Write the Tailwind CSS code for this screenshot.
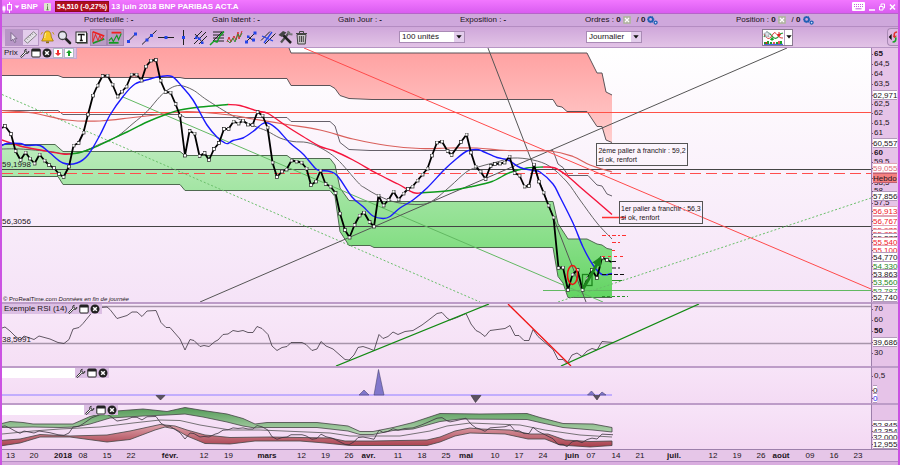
<!DOCTYPE html>
<html lang="fr">
<head>
<meta charset="utf-8">
<meta name="viewport" content="width=device-width, initial-scale=1">
<title>BNP PARIBAS ACT.A</title>
<script src="https://cdn.jsdelivr.net/npm/@tailwindcss/browser@4"></script>
</head>
<body class="min-h-screen flex flex-col bg-[#e6c3e8] border-x-2 border-[#cb52e2] font-['Liberation_Sans',Arial,sans-serif] text-[8px] leading-[10px] text-[#1c1420] overflow-x-hidden">

<svg class="hidden" aria-hidden="true">
  <defs>
    <symbol id="wrench" viewBox="0 0 10 10"><path d="M6.200 1.200C4.600 1.600 4.200 3 4.800 4.200L.8 8.200c-.4.8.4 1.500 1.100 1.100L5.900 5.200C7.400 5.800 9 5 9 3.400L7.600 4.400 6 4 5.800 2.600z" fill="#fff" stroke="#222" stroke-width=".9"/></symbol>
    <symbol id="win" viewBox="0 0 10 10"><rect x=".8" y="1" width="8.400" height="8" rx="1" fill="#fff" stroke="#222"/><path d="M.8 1h8.400v2.500H.8z" fill="#222"/></symbol>
    <symbol id="close" viewBox="0 0 10 10"><circle cx="5" cy="5" r="4.500" fill="#222"/><path d="m3.200 3.200 3.600 3.600m0-3.600L3.200 6.800" stroke="#fff" stroke-width="1.500"/></symbol>
    <symbol id="orderx" viewBox="0 0 8 8"><rect width="8" height="8" rx="1" fill="#b4b4a6"/><path d="m2 2 4 4m0-4L2 6" stroke="#fff" stroke-width="1.300"/></symbol>
    <symbol id="gears" viewBox="0 0 11 9"><circle cx="3.600" cy="3.400" r="2.300" fill="none" stroke="#1f5fb4" stroke-width="1.800"/><circle cx="3.600" cy="3.400" r="3.200" fill="none" stroke="#1f5fb4" stroke-width=".9" stroke-dasharray="1.200 1.100"/><circle cx="8.600" cy="6.600" r="1.500" fill="#cfe0ff" stroke="#1f5fb4" stroke-width="1.300"/></symbol>
    <symbol id="down" viewBox="0 0 6 4"><path d="M.3.3h5.400L3 3.600z" fill="#111"/></symbol>
  </defs>
</svg>

<header class="h-[14px] flex items-center pr-[2px] bg-linear-to-b from-[#f277ff] to-[#d95cf0] border-b border-[#b565c8] text-white font-bold">
  <svg class="w-[11px] h-3" viewBox="0 0 11 12" fill="none" stroke="#fff"><path d="M2 4.500v7M7.500 1v11"/><rect x="1" y="6" width="2" height="3" fill="#fff"/><rect x="5.500" y="3.500" width="4" height="5.500" fill="#e468f8"/></svg>
  <svg class="w-[6px] h-1 ml-[1px]" viewBox="0 0 6 4"><path d="M.5.5h5L3 3.500z" fill="#fff"/></svg>
  <h1 class="ml-[1px] w-[23px]">BNP</h1>
  <button aria-label="Informations" class="w-[7px] h-2"><svg class="size-full" viewBox="0 0 7 8"><rect width="7" height="8" rx="1" fill="#dfe6cf"/><path d="M3.500 1.200v1.300M3.500 3.300v3.500M2.400 6.800h2.200" stroke="#5c7c50"/></svg></button>
  <span class="ml-1 px-[1px] h-[11px] bg-[#b00d1d] border border-[#8a0a20] text-[7px] leading-[9px]">54,510 (-0,27%)</span>
  <span class="ml-[2px]">13 juin 2018 BNP PARIBAS ACT.A</span>
  <div class="ml-auto flex items-center gap-1">
    <button aria-label="Clavier" class="w-[13px] h-[9px]"><svg class="size-full" viewBox="0 0 13 9"><rect width="13" height="9" rx="1" fill="#fff"/><path d="M2 2.500h9M2 4.500h9" stroke="#c95be0" stroke-dasharray="1 1"/><path d="M3.500 6.800h6" stroke="#c95be0"/></svg></button>
    <button aria-label="Réduire" class="w-[6px] h-2"><svg class="size-full" viewBox="0 0 6 8"><path d="M0 7h6" stroke="#fff" stroke-width="1.500"/></svg></button>
    <button aria-label="Restaurer" class="w-[6px] h-2"><svg class="size-full" viewBox="0 0 6 8" fill="none" stroke="#fff"><path d="M2 3V1h3.500v4H4"/><path d="M.5 3.500H4v3.500H.5z"/></svg></button>
    <button aria-label="Fermer" class="w-[7px] h-2"><svg class="size-full" viewBox="0 0 7 8"><path d="m1 1.500 5 5m0-5-5 5" stroke="#fff" stroke-width="1.500"/></svg></button>
  </div>
</header>

<div class="h-[13px] grid grid-cols-[128fr_126fr_122fr_125fr_151fr_162fr] items-center pl-[82px] bg-[#cfa8dc] border-b border-[#b48cc2] leading-3">
  <span>Portefeuille : <b>-</b></span>
  <span>Gain latent : <b>-</b></span>
  <span>Gain Jour : <b>-</b></span>
  <span>Exposition : <b>-</b></span>
  <span class="flex items-center gap-[2px]"><span>Ordres : <b>0</b></span><svg class="size-2"><use href="#orderx"/></svg><span class="ml-1">/ <b>0</b></span><svg class="w-[11px] h-[9px]"><use href="#gears"/></svg></span>
  <span class="flex items-center gap-[2px]"><span>Position : <b>0</b></span><svg class="size-2"><use href="#orderx"/></svg><span class="ml-1">/ <b>0</b></span><svg class="w-[11px] h-[9px]"><use href="#gears"/></svg></span>
</div>

<div class="h-[21px] flex items-center pl-[3px] bg-linear-to-b from-[#cfa7da] to-[#e2c3e6] border-b border-[#b795c4]">
  <div class="flex items-center [&>button]:w-[17px] [&>button]:h-[17px] [&_svg]:size-full" role="toolbar" aria-label="Outils de dessin">
    <button aria-label="Curseur" class="bg-[#b796c6]"><svg viewBox="0 0 17 17"><path d="M6 3.500v8.500l2-1.800 1.600 3.300 1.300-.7-1.500-3.100h2.600z" fill="#e8dcf0" stroke="#6d5a7c" stroke-width=".8"/></svg></button>
    <button aria-label="Règle" class="bg-[#e3cdec] border border-[#b796c6]"><svg viewBox="0 0 17 17"><path d="M1.500 11.500 12 2l3.500 3.500L5 15z" fill="#e6e2ea" stroke="#777" stroke-width="1"/><path d="m4 9.500 1.500 1.500M6 7.700 7.500 9.200M8 5.900l1.500 1.500M10 4.100l1.500 1.500" stroke="#777" stroke-width=".8"/></svg></button>
    <button aria-label="Alerte"><svg viewBox="0 0 17 17"><path d="M8.500 2c3 0 3.600 3 3.800 6l2 4H2.700l2-4c.2-3 .8-6 3.800-6z" fill="#f6c522" stroke="#9a7410" stroke-width=".8"/><path d="M7 12.500h3v1.700H7z" fill="#8c6b12"/><path d="M3.500 3 2 5.500M13.500 3 15 5.500" stroke="#c79a15"/><path d="M7 4c-1 1-1 3-1.200 5" stroke="#fff4b0" fill="none"/></svg></button>
    <button aria-label="Zoom"><svg viewBox="0 0 17 17"><path d="m9 9 5 5" stroke="#222" stroke-width="2.600" stroke-linecap="round"/><circle cx="6.500" cy="6.500" r="4" fill="#e6e6ee" stroke="#444" stroke-width="1.300"/></svg></button>
    <button aria-label="Texte"><svg viewBox="0 0 17 17"><path d="M4 14.500h10.500V4" stroke="#777" fill="none"/><rect x="3" y="3" width="10.500" height="10.500" fill="#fff" stroke="#333"/><path d="M5.500 6.500V5.500h5.500v1M8.250 5.500v6M6.800 11.500h3" stroke="#111" stroke-width="1.300" fill="none"/></svg></button>
    <button aria-label="Triangle" class="bg-[#b99bc4] border border-[#a485b2]"><svg viewBox="0 0 17 17" fill="none"><path d="m2 2 13 5" stroke="#f02020" stroke-width="2"/><path d="m2 15 13-5" stroke="#129a20" stroke-width="2"/><path d="M2 2v12l3-9 3 7 2-6 2 5 2-4" stroke="#e03030" stroke-width="1.200"/></svg></button>
    <button aria-label="Supports" class="bg-[#b99bc4] border border-[#a485b2]"><svg viewBox="0 0 17 17" fill="none"><path d="M4 3h11" stroke="#f02020" stroke-width="2"/><path d="M1 14.500h11" stroke="#129a20" stroke-width="2"/><path d="m1 12 3-3 2 4 4-7 2 5 3-7" stroke="#169a24" stroke-width="1.300"/></svg></button>
    <button aria-label="Segment"><svg viewBox="0 0 17 17"><path d="m4.500 12 7-7" stroke="#222"/><path d="M10 3.500h3v3h-3zM3 11h3v3H3z" fill="#2445e8"/></svg></button>
    <button aria-label="Droite"><svg viewBox="0 0 17 17"><path d="M1 15.500 15.500 1.500" stroke="#222"/><path d="M9 5h3v3H9zM4.500 9.500h3v3h-3z" fill="#2445e8"/></svg></button>
    <button aria-label="Horizontale"><svg viewBox="0 0 17 17"><path d="M0 8.500h16" stroke="#222"/><path d="M6.500 7h3v3h-3z" fill="#2445e8"/></svg></button>
    <button aria-label="Verticale"><svg viewBox="0 0 17 17"><path d="M8.500 1v15" stroke="#222"/><path d="M7 7h3v3H7z" fill="#2445e8"/></svg></button>
    <button aria-label="Fourchette"><svg viewBox="0 0 17 17" fill="none" stroke="#222"><path d="m2 10 8-8M2 15 14 3M7 15l8-8M3 5l8 9"/><path d="M3 7.500h2.500V10H3zM9 12.500h2.500V15H9zM6 8.500h2.500V11H6z" fill="#2445e8" stroke="none"/></svg></button>
    <button aria-label="Fibonacci"><svg viewBox="0 0 17 17" fill="none"><path d="M4 3h11M4 6h11M4 9h11M4 12h11" stroke="#222"/><path d="m4 12 9-9" stroke="#222"/><path d="m1 16 4-4 3 1 3-6 4-4.500" stroke="#14a024" stroke-width="1.500"/></svg></button>
    <button aria-label="Vagues"><svg viewBox="0 0 17 17" fill="none"><path d="m1 13 2-5 2 5 3-6 2 4 2-8 1 7 3-8" stroke="#d52b2b"/><path d="m1 11 3 3 3-5 2 4 3-8 2 3 2-4" stroke="#3a8f3a"/></svg></button>
    <button aria-label="Points"><svg viewBox="0 0 17 17" fill="none"><path d="m3 13 9-9M4 7l7 5" stroke="#222"/><path d="M10.500 2.500h3v3h-3zM2 11.500h3v3H2zM9 9.500h3v3H9zM4 6.500h2.500V9H4z" fill="#2445e8"/></svg></button>
    <button aria-label="Canal"><svg viewBox="0 0 17 17" fill="none"><path d="M1 11.500 10 2.500M5 15 15.500 4.500" stroke="#222"/><path d="m2 7 11 5M4 14l8-11" stroke="#2445e8" stroke-width="1.300"/></svg></button>
    <button aria-label="Réglages"><svg viewBox="0 0 17 17"><path d="M12.500 3 4 13.500" stroke="#555" stroke-width="2.200"/><path d="m6 6 8 8" stroke="#222" stroke-width="2.500"/><path d="M1.500 6 6 2l3.500 1.500L5 8z" fill="#444"/><path d="m11 2 1 3 3.500.5" stroke="#777" stroke-width="2" fill="none"/></svg></button>
    <button aria-label="Supprimer"><svg viewBox="0 0 17 17"><path d="M3 5.500h9l-.8 9.500H3.800z" fill="#c8c4c8" stroke="#444"/><path d="M2 4.500h11M5.500 4V2.500h4V4M5.700 7v6M7.500 7v6M9.300 7v6" stroke="#444" fill="none"/></svg></button>
  </div>
  <label class="ml-[88px] w-[66px] h-3 flex items-center bg-white border border-[#a98bb5]"><select aria-label="Nombre d'unités" class="appearance-none bg-transparent flex-1 min-w-0 pl-[2px] leading-[10px]"><option>100 unités</option></select><span class="w-[10px] h-full flex items-center justify-center bg-[#e3cdec] pointer-events-none"><svg class="w-[6px] h-1"><use href="#down"/></svg></span></label>
  <label class="ml-[121px] w-[56px] h-3 flex items-center bg-white border border-[#a98bb5]"><select aria-label="Unité de temps" class="appearance-none bg-transparent flex-1 min-w-0 pl-[2px] leading-[10px]"><option>Journalier</option></select><span class="w-[10px] h-full flex items-center justify-center bg-[#e3cdec] pointer-events-none"><svg class="w-[6px] h-1"><use href="#down"/></svg></span></label>
  <button aria-label="Modèle de graphique" class="ml-auto w-[31px] h-[17px] flex bg-white border border-[#8a7a90]">
    <svg class="w-[21px] h-full" viewBox="0 0 21 15" fill="none"><path d="M1 7c3-6 6-4 8-1s5 4 8-2l3-1" stroke="#2c9a3a" stroke-width="1.200"/><path d="M1 4c4 7 6 5 9 0s4 5 10 4" stroke="#d84040"/><path d="M1 14.500h19" stroke="#4d6be0" stroke-width="1.500"/><path d="M2 14v-2M5 14v-3M8 14v-2M14 14v-2M18 14v-3" stroke="#18a028" stroke-width="2"/><path d="M3.500 14v-2M11 14v-2M16 14v-3" stroke="#e02020" stroke-width="1.500"/><path d="M9 11V8M7.500 9.500 9 7.500l1.500 2z" stroke="#18a028" fill="#18a028"/><path d="M16 2v3M14.500 4.500 16 6.500l1.500-2z" stroke="#e02020" fill="#e02020"/><path d="m4 1 1 2 2 .3L5.500 5 6 7 4 6 2 7l.5-2L1 3.300 3 3z" fill="#dde3ea" stroke="#8a96a4" stroke-width=".7"/></svg>
    <span class="flex-1 h-full flex items-center justify-center border-l border-[#b79cc0]"><svg class="w-[6px] h-1"><use href="#down"/></svg></span>
  </button>
  <button aria-label="Passer un ordre" class="ml-[94px] w-[11px] h-[18px] rounded-l bg-[#dcb8e2] border border-r-0 border-[#a98bb5]"><svg class="size-full" viewBox="0 0 11 17"><path d="M4 5v7L.8 8.500z" fill="#111"/><path d="M10 3C7 3 6.500 5 7 8" stroke="#e03030" stroke-width="1.800" fill="none"/><path d="M5 7h5L7 10z" fill="#e03030"/><path d="M5 14c3.500 0 4-2 3.500-5" stroke="#18a028" stroke-width="1.800" fill="none"/></svg></button>
</div>

<main class="grid grid-cols-[minmax(0,1fr)_27px]">
  <!-- Prix -->
  <section class="relative h-[254px] bg-linear-to-b from-white to-[#f5e3f7] overflow-hidden" aria-label="Prix">
    <svg class="block size-full" viewBox="2 48 869 254" preserveAspectRatio="none" fill="none" stroke-width="1">
      <defs>
        <linearGradient id="gr" gradientUnits="userSpaceOnUse" x1="0" y1="48" x2="0" y2="142"><stop offset="0" stop-color="#ffa0a0"/><stop offset="1" stop-color="#ffcdcd"/></linearGradient>
        <linearGradient id="gg" gradientUnits="userSpaceOnUse" x1="0" y1="144" x2="0" y2="298"><stop offset="0" stop-color="#bcebbd"/><stop offset=".6" stop-color="#8adf8a"/><stop offset="1" stop-color="#62d462"/></linearGradient>
        <marker id="pt" markerUnits="userSpaceOnUse" markerWidth="4" markerHeight="4" refX="2" refY="2"><rect x=".5" y=".5" width="3" height="3" fill="#fff" stroke="#222" stroke-width=".7"/></marker>
        <marker id="ah" markerUnits="userSpaceOnUse" markerWidth="12" markerHeight="10" refX="8" refY="5" orient="auto"><path d="M0 0 10 5 0 10z" fill="#1d861d"/></marker>
      </defs>
      <path fill="url(#gr)" d="M2 48H289L291 53H587L597 73H602L606 92 612 95V142.500L606 140 602 126.500H597L587 111.500H567L562 107 557 106 553 99.500H372L349 98.500 340 95.500 335 88.500 330 85.500H291L287 78.500H185L180 77.500H63L58 75.500H2z"/>
      <path stroke="#5b5358" d="M289 48 291 53H587L597 73H602L606 92 612 95M612 142.500 606 140 602 126.500H597L587 111.500H567L562 107 557 106 553 99.500H372L349 98.500 340 95.500 335 88.500 330 85.500H291L287 78.500H185L180 77.500H63L58 75.500H2"/>
      <path fill="url(#gg)" d="M2 144.500H55L63 151.500H180L185 155.500H287L291 158.500H330L335 165 340 188 349 200.500 371 201.500H553L558 223.500 568 239H587L597 244 602 245 607 248.500 612 249.500V297.500H568L563 283 558 276.500 553 247.500H374L370 245.500H349L340 231.500 335 196.500 330 190.500H185L180 184.500H63L58 176.500H2z"/>
      <path stroke="#4f6a50" d="M2 144.500H55L63 151.500H180L185 155.500H287L291 158.500H330L335 165 340 188 349 200.500 371 201.500H553L558 223.500 568 239H587L597 244 602 245 607 248.500 612 249.500M612 297.500H568L563 283 558 276.500 553 247.500H374L370 245.500H349L340 231.500 335 196.500 330 190.500H185L180 184.500H63L58 176.500H2"/>
      <path stroke="#66606a" d="M2 110.500H58L63 114.500H180L185 117.500H287L291 121.500H330L335 126 340 142.500 349 149.500 370 150.500H553L558 164 563 167.500 568 175.500H588L597 185 602 186 607 194 612 196"/>
      <path stroke="#ff5147" d="M2 112.500H871"/>
      <path stroke="#444" d="M2 169.500H871M2 226.500H871"/>
      <path stroke="#ff4d4d" stroke-dasharray="11 5" d="M2 173.500H871"/>
      <path stroke="#62b862" d="M123 97 603 302M543 290.500H871"/>
      <path stroke="#6abf6a" stroke-dasharray="2 2" d="M2 94.500 480 302M558 302 871 198"/>
      <path stroke="#555" d="M200 302 787 48M488 48 586 302"/>
      <path stroke="#ff4a4a" d="M304 48 871 289"/>
      <g id="curves"></g>
      <path id="price" stroke="#000" stroke-width="1.800" marker-mid="url(#pt)" stroke-linejoin="round"/>
      <ellipse cx="572.500" cy="275" rx="5" ry="9.500" stroke="#f01010" stroke-width="1.500"/>
      <rect x="582.500" y="274.500" width="9.500" height="11" stroke="#1d861d" stroke-width="1.300"/>
      <path stroke="#1d861d" stroke-width="3" marker-end="url(#ah)" d="M583 289 600.500 258"/>
      <g stroke="#ff3030"><path d="M602 217.500H626" stroke-width="1.500"/><path stroke-dasharray="4 2 2 2" d="M602 235.500H626M612 242.500H621"/><path stroke-dasharray="3 3" d="M612 250.500H618M602 256.500H626"/></g>
      <g stroke="#111" stroke-dasharray="4 2"><path d="M612 261.500H618M612 268H620M602 274.500H626"/></g>
      <g stroke="#2b8f2b"><path d="M612 280.500H622"/><path stroke-dasharray="3 2" d="M602 296.500H628"/></g>
    </svg>
    <div class="absolute left-0 top-0 flex items-center h-[11px] pl-[2px] pr-[2px] gap-[1px] bg-[#dcbfe4] border-r border-b border-[#c5a5cf]"><h2>Prix</h2><button aria-label="Réglages Prix" class="size-[10px] ml-[1px]"><svg class="size-full"><use href="#wrench"/></svg></button><button aria-label="Agrandir Prix" class="size-[10px]"><svg class="size-full"><use href="#win"/></svg></button><button aria-label="Fermer Prix" class="size-[10px]"><svg class="size-full"><use href="#close"/></svg></button><button aria-label="Vendre" class="size-[10px]"><svg class="size-full" viewBox="0 0 10 10"><rect x=".5" y=".5" width="9" height="9" fill="#fff" stroke="#aebac4"/><path d="M4 2h2v3h2L5 8 2 5h2z" fill="#f03030"/></svg></button><button aria-label="Acheter" class="size-[10px]"><svg class="size-full" viewBox="0 0 10 10"><rect x=".5" y=".5" width="9" height="9" fill="#fff" stroke="#aebac4"/><path d="M4 8h2V5h2L5 2 2 5h2z" fill="#18a028"/></svg></button></div>
    <span class="absolute left-0 top-[112px]">59,1998</span>
    <span class="absolute left-0 top-[169px]">56,3056</span>
    <p class="absolute left-[1px] bottom-[-2px] text-[6px]">© ProRealTime.com <i>Données en fin de journée</i></p>
    <p class="absolute left-[68.400%] top-[95px] w-max h-[23px] px-[1px] pt-[2px] text-[7px] leading-[9px] whitespace-nowrap border border-[#555] bg-white/10">2ème palier à franchir : 59,2<br>si ok, renfort</p>
    <p class="absolute left-[71%] top-[153px] w-max h-[23px] px-[1px] pt-[2px] text-[7px] leading-[9px] whitespace-nowrap border border-[#555] bg-white/10">1er palier à franchir : 56,3<br>si ok, renfort</p>
  </section>
  <div id="ax1" class="relative overflow-hidden border-l border-[#9c7fab]"></div>

  <!-- RSI -->
  <section class="relative h-16 border-t-2 border-[#bd9cc8] bg-linear-to-b from-[#f8e8f9] to-[#f5dff5] overflow-hidden" aria-label="Exemple RSI">
    <svg class="block size-full" viewBox="2 304 869 62" preserveAspectRatio="none" fill="none">
      <path stroke="#a795aa" stroke-width="1.500" d="M2 306.500H871M2 343.500H871"/>
      <path id="rsi" stroke="#3b333d" stroke-width=".8" vector-effect="non-scaling-stroke"/>
      <path stroke="#128a12" stroke-width="1.300" d="M336 366 489 304M561 366 699 304"/>
      <path stroke="#f01414" stroke-width="1.300" d="M508 304 571 366"/>
    </svg>
    <div class="absolute left-0 top-0 flex items-center h-[10px] pl-[2px] pr-[2px] gap-[1px] bg-[#dcbfe4]"><h2>Exemple RSI (14)</h2><button aria-label="Réglages RSI" class="size-[10px]"><svg class="size-full"><use href="#wrench"/></svg></button><button aria-label="Agrandir RSI" class="size-[10px]"><svg class="size-full"><use href="#win"/></svg></button><button aria-label="Fermer RSI" class="size-[10px]"><svg class="size-full"><use href="#close"/></svg></button></div>
    <span class="absolute left-0 top-[31px]">38,5091</span>
  </section>
  <div id="ax2" class="relative overflow-hidden border-l border-t-2 border-l-[#9c7fab] border-t-[#bd9cc8]"></div>

  <!-- Signaux -->
  <section class="relative h-[37px] border-t-2 border-[#bd9cc8] bg-linear-to-b from-[#f7e4f8] to-[#f4dbf4] overflow-hidden" aria-label="Signaux">
    <svg class="block size-full" viewBox="2 368 869 35" preserveAspectRatio="none">
      <path stroke="#b09cff" stroke-width="1.500" d="M2 395H612"/>
      <path fill="#8277cc" stroke="#4a4470" stroke-width=".6" d="M359 395 364 390 369 395zM374 395 378.500 369.500 384 395zM587.500 395 591.500 391 595 395zM599 395 602 392 606 395z"/>
      <path fill="#5c5260" stroke="#333" stroke-width=".6" d="M156 395.500H165L160.500 400zM471 395.500H481L475.500 402.500zM593.500 395.500H600L597 400z"/>
    </svg>
    <div class="absolute left-0 top-0 flex items-center h-[10px] bg-[#dcbfe4] gap-[1px] pr-[1px]"><span class="w-[73px] h-full bg-white"></span><button aria-label="Réglages" class="size-[10px]"><svg class="size-full"><use href="#wrench"/></svg></button><button aria-label="Agrandir" class="size-[10px]"><svg class="size-full"><use href="#win"/></svg></button><button aria-label="Fermer" class="size-[10px]"><svg class="size-full"><use href="#close"/></svg></button></div>
  </section>
  <div id="ax3" class="relative overflow-hidden border-l border-t-2 border-l-[#9c7fab] border-t-[#bd9cc8]"></div>

  <!-- Bandes -->
  <section class="relative h-[46px] border-t-2 border-[#bd9cc8] bg-linear-to-b from-[#f7e4f8] to-[#f3d8f3] overflow-hidden" aria-label="Bandes">
    <svg class="block size-full" viewBox="2 405 869 44" preserveAspectRatio="none" fill="none">
      <defs>
        <linearGradient id="bg" gradientUnits="userSpaceOnUse" x1="0" y1="408" x2="0" y2="434"><stop offset="0" stop-color="#559c58"/><stop offset="1" stop-color="#b5d4b3"/></linearGradient>
        <linearGradient id="br" gradientUnits="userSpaceOnUse" x1="0" y1="424" x2="0" y2="447"><stop offset="0" stop-color="#e0a5ae"/><stop offset="1" stop-color="#a83e4c"/></linearGradient>
      </defs>
      <path fill="url(#bg)" stroke="#444" stroke-width=".8" d="M0 424 10 421.500 23 422.500 33 424H73L90 416.500 110 411.500 143 409 167 411.500 185 407.500 203 410.500 227 414 243 418.500 255 424 267 422.500 317 422.500 348 426 360 431.500H373L393 427.500 413 422.500 440 413.500 480 414 527 413.500 540 417.500 563 423.500 593 424 612 427.500V432L593 430 563 427.500 540 422.500 527 419.500 460 419 440 421.500 413 429 393 430.500 373 434.500H360L348 431 317 427.500H267L255 428 243 426 227 422 203 417 185 414 167 415 143 416 110 418 90 424 75 427 60 427.500 33 427 0 427.500z"/>
      <path fill="url(#br)" stroke="#444" stroke-width=".8" d="M0 440.500 20 439 40 434.500 70 436 107 435 130 431 160 424.500 175 426 187 430 205 435 230 437.500 270 437 330 438 345 441H373L427 440 440 437 455 431 470 428 480 429 510 430 530 434H548L565 440 590 441.500 612 441V445.500L590 447 560 445 545 439H528L505 434 470 433 455 436 440 442 427 445.500H350L325 443 300 441H255L230 444 205 443.500 187 436 175 429 165 427 155 430 130 439.500 107 442 70 437H40L20 443 0 446z"/>
      <path stroke="#555" stroke-width=".8" d="M2 434 33 431 60 429 100 427 133 423 160 420 180 420.500 200 425 230 430H260L330 433 350 436H400L430 431 447 426 470 423 520 425 545 430 580 435 612 437"/>
      <use href="#rsi" transform="matrix(1 0 0 .57 0 239.500)"/>
    </svg>
    <div class="absolute left-0 top-0 flex items-center h-[10px] bg-[#dcbfe4] gap-[1px] pr-[1px]"><span class="w-[82px] h-full bg-white"></span><button aria-label="Réglages" class="size-[10px]"><svg class="size-full"><use href="#wrench"/></svg></button><button aria-label="Agrandir" class="size-[10px]"><svg class="size-full"><use href="#win"/></svg></button><button aria-label="Fermer" class="size-[10px]"><svg class="size-full"><use href="#close"/></svg></button></div>
  </section>
  <div id="ax4" class="relative overflow-hidden border-l border-t-2 border-l-[#9c7fab] border-t-[#bd9cc8]"></div>

  <div id="dates" class="relative h-3 border-t border-[#9c7fab] bg-[#e6c6e8] overflow-hidden"></div>
  <div class="bg-[#e6c6e8] border-t border-[#9c7fab]"></div>
</main>
<footer class="min-h-1 flex-1 bg-[#d9addf] border-t border-[#b48cc2]"></footer>

<script>
// Price samples, one [x, y] pair per session
const price = "2 128 5 126 11 134 15.5 151 20.5 160 25.5 152.5 30 158.5 34.5 163.5 39.5 154.5 44.5 160.5 49 165 54 168 59 174 63.5 177 69 166.5 73.5 145.5 78.5 143 83.5 132.5 88 114.5 93 95.5 97.5 85.5 102.5 76 107.5 75.5 112.5 84.5 117.5 96.5 122 91.5 126.5 86.5 131.5 74.5 136.5 74.5 141.5 80.5 146 66.5 151 60.5 156 60 160.5 80.5 165.5 92 170.5 92.5 175.5 104 180 115.5 185 155.5 189.5 131 194.5 133.5 199.5 156 204.5 153 209 160 214 149 219 143 224 129 228.5 129 233.5 121.5 238.5 123.5 243 120.5 248 124.5 252.5 125 257.5 112 262.5 115.5 267.5 127.5 272.5 162.5 277 177 282 171.5 286.5 169.5 291.5 160.5 296.5 161.5 301.5 162.5 306.5 168.5 311 185 316 181.5 320.5 170.5 325.5 184 330.5 186.5 335.5 193 340 213.5 345 230 349.5 237.5 354.5 225 359.5 215.5 364 212.5 369.5 222 374 226.5 378.5 195.5 383.5 205.5 388.5 200 393.5 191.5 398.5 199.5 403.5 193.5 408 189 412.5 186.5 417.5 180.5 422.5 174.5 427.5 168.5 432 155.5 437 142.5 442 141.5 447.5 151 451.5 155 461 142 466.5 134.5 471 152.5 475.5 166.5 480.5 171.5 485.5 179 490.5 166 495 164 500 163.5 504.5 162.5 509.5 156.5 514.5 173 519.5 175.5 524.5 186.5 529 186 534 164.5 539 181.5 543.5 192.5 548.5 205.5 553.5 217.5 558.5 268 563 267.5 568 290 572.5 274.5 577.5 270 582.5 290 587.5 278.5 592 270 597 278 602 257.5 607 260 611.5 262";
const rsi = "2 328 5 327 10 331 15 336 20 340 24 336 34 339.5 39 336 50 339 58 342.5 64 343.5 69 339.5 73 329 79 327.5 83 323.5 92 312.5 100 307.5 107 307 110 309.5 117 318.5 127 315.5 132 312 137 312 142 316.5 147 311 156 310.5 161 322.5 166 327.5 170 327.5 180 339 185 350 190 339.5 194 340.5 200 346.5 204 345.5 209 346.5 215 341.5 218 340 223 334.5 228 334 233 330.5 238 331.5 243 330.5 248 332.5 253 332.5 257 326.5 262 328.5 268 334.5 272 346 277 350.5 282 347.5 287 346.5 291 342.5 302 342.5 306 344.5 312 350.5 317 349 321 341.5 326 346 333 349 345 359.5 349 360 354 355 358 347.5 363 346.5 369 348.5 374 350.5 379 334.5 383 338.5 388 336.5 393 332 398 334.5 405 331.5 413 330.5 422 325 428 320.5 437 313.5 442 312.5 447 318 450 320 457 317.5 466 313.5 471 324 476 330.5 480 332.5 485 336.5 490 330.5 505 328.5 510 325.5 515 335.5 519 335.5 524 340.5 529 340.5 533 329.5 538 336.5 553 349.5 558 359.5 563 359.5 567 363.5 572 355 577 353 582 356.5 587 351 592 348.5 597 350 602 341.5 613 342.5";
// Moving averages: colour, width, samples
const averages = [
  ["#555", 0.9, "2 149 20 149 50 151.5 63 153.5 80 152.5 100 144 117 136.5 133 123.5 147 111.5 160 96.5 170 88.5 180 85.5 193 90 207 100 233 116 253 125.5 267 131 280 138 293 141.5 307 142.5 320 147.5 337 159 358 182.5 365 188 380 196.5 397 202.5 420 204.5 433 200.5 450 186.5 467 171.5 480 166.5 497 162 513 158 533 160 550 166.5 567 182 580 200 597 223 612 239"],
  ["#d9605c", 1.2, "2 110.5 33 113 67 120 100 121 133 117.5 160 114.5 187 111.5 230 115 253 119 287 124.5 320 130 353 139 387 145.5 420 148.5 450 148 477 148 507 150.5 550 151 573 156.5 590 165 612 172"],
  ["#f5143c", 1.4, "2 140 20 146 43 150.5 63 154 70 154"],
  ["#0e9a1c", 1.4, "70 154 80 152.5 93 148 110 140 127 132 147 122 167 114 180 110 200 107 228 104.5"],
  ["#f5143c", 1.4, "228 104.5 240 105.5 257 111 268 113.5 287 126.5 303 136.5 320 146.5 333 150.5 353 160 377 173.5 398 184 413 192.5 420 193"],
  ["#0e9a1c", 1.4, "420 193 450 190.5 472 186.5 492 181.5 510 172.5 527 168 543 167"],
  ["#f5143c", 1.4, "543 167 555 168 568 176.5 580 187 597 201.5 612 214.5"],
  ["#1a1aff", 1.4, "2 145.5 7 143.5 20 143.5 27 145.5 40 145.5 50 153 63 163 77 163 88 155 100 135 110 115 123 96.5 135 84 150 79 160 76.5 172 76.5 182 86.5 193 100 207 125 218 138 225 143 228 143.5 233 140.5 243 138 253 131.5 262 124 268 123 277 129 290 143 303 154 315 168 320 170.5 330 171.5 338 176.5 352 197 363 206.5 373 216 383 218.5 390 216.5 400 208 413 200 427 188 444 170 455 160 467 151 477 149.5 483 151.5 497 157.5 508 160 520 167.5 533 170.5 540 172 553 184 560 197 573 223 583 247 593 265 602 274.5 612 273.5"]
];
const pairs = s => s.split(" ").map(Number).reduce((a, v, i) => (i % 2 ? a[a.length - 1].push(v) : a.push([v]), a), []);
const line = s => "M" + pairs(s).map(p => p.join(" ")).join("L");
function smooth(s) {
  const p = pairs(s);
  let d = "M" + p[0];
  for (let i = 0; i < p.length - 1; i++) {
    const a = p[i - 1] || p[i], b = p[i], c = p[i + 1], e = p[i + 2] || c;
    d += `C${b[0] + (c[0] - a[0]) / 6} ${b[1] + (c[1] - a[1]) / 6} ${c[0] - (e[0] - b[0]) / 6} ${c[1] - (e[1] - b[1]) / 6} ${c[0]} ${c[1]}`;
  }
  return d;
}
document.getElementById("price").setAttribute("d", line(price));
document.getElementById("rsi").setAttribute("d", line(rsi));
document.getElementById("curves").innerHTML = averages.map(([c, w, s]) => `<path stroke="${c}" stroke-width="${w}" d="${smooth(s)}"/>`).join("");

// Axis labels: text, centre, kind
const kinds = {
  t: "pl-px", b: "pl-px font-bold",
  k: "bg-white border-y border-[#b49abb] text-[#1c1420]",
  r: "bg-white border-y border-[#e0a5b5] text-[#f01828]",
  p: "bg-white border-y border-[#e0a5b5] text-[#e06a78]",
  g: "bg-white border-y border-[#b49abb] text-[#1d861d]",
  u: "bg-white border-y border-[#b49abb] text-[#2a2af0]",
  h: "bg-[#f58080] border-y border-[#c06070] text-[#1c1420]"
};
const axis = (id, top, list) => {
  document.getElementById(id).innerHTML = list.map(([s, y, k]) =>
    `<span class="absolute left-0 flex items-center" style="top:${y - top - 5}px"><i class="w-px h-px bg-[#6d5578]"></i><span class="block h-[10px] leading-[9px] ${kinds[k]}">${s}</span></span>`).join("");
};
axis("ax1", 48, [["65",54,"b"],["64,5",64,"t"],["64",74,"t"],["63,5",84,"t"],["62,5",104,"t"],["62",113,"t"],["61,5",123,"t"],["61",133,"t"],["60",153,"b"],["59,5",162,"t"],["58,5",183,"t"],["58",191,"t"],["57,5",203,"t"],
  ["62,971",95,"k"],["60,557",143,"k"],["59,055",168,"p"],["Hebdo",178,"h"],["57,856",196,"k"],["56,913",211,"r"],["56,767",221,"r"],["55,970",230,"r"],["55,850",234,"r"],["55,277",238,"k"],["55,540",242,"r"],["55,100",250,"r"],["54,330",266,"g"],["54,770",257,"k"],["53,863",274,"k"],["53,560",282,"g"],["52,787",291,"g"],["52,740",297,"k"]]);
axis("ax2", 304, [["70",309,"t"],["60",320,"t"],["50",331,"b"],["30",353,"t"],["39,686",342,"k"]]);
axis("ax3", 368, [["0,5",376,"t"],["0",390,"k"],["0",398,"u"]]);
axis("ax4", 405, [["52,845",425,"k"],["42,354",431,"k"],["32,000",437,"k"],["12,955",444,"k"]]);

const dates = [["13",10.5],["20",34],["2018",63,1],["08",83],["15",107],["22",131],["févr.",170,1],["12",204],["19",228.5],["mars",267,1],["12",301.5],["19",325.5],["26",349],["avr.",368.5,1],["11",398],["18",422],["25",446],["mai",466,1],["10",495],["17",519],["24",543],["juin",572,1],["07",591],["14",616],["21",640],["juil.",674,1],["12",713],["19",737],["26",761],["août",781,1],["09",810],["16",834],["23",858]];
document.getElementById("dates").innerHTML = dates.map(([s, x, b]) =>
  `<span class="absolute top-px -translate-x-1/2 ${b ? "font-bold" : ""}" style="left:${(x - 2) / 8.69}%">${s}</span>`).join("");
</script>
</body>
</html>
